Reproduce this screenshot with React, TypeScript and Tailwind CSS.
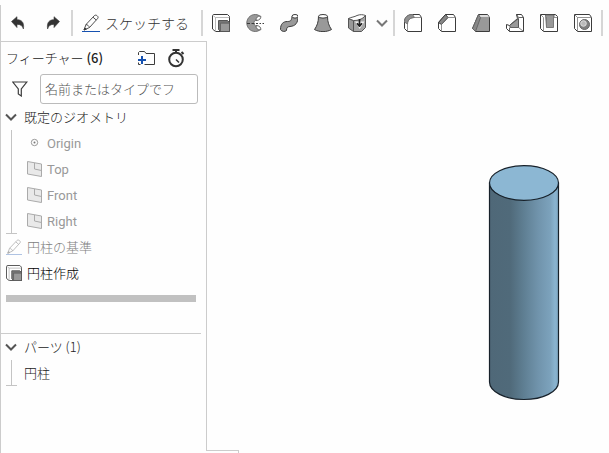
import type { ReactNode } from 'react';

const line = '#3c3c3c';
const fill = '#999999';

function Icon({ size = 18, children }: { size?: number; children: ReactNode }) {
  return (
    <svg className="shrink-0" width={size} height={size} viewBox="0 0 18 18" fill="none" stroke={line} strokeLinejoin="round">
      {children}
    </svg>
  );
}

function UndoIcon() {
  return (
    <Icon>
      <path d="M2.500 7.500 8 2.700v3c4.700 0 7.500 2.600 6.400 9.300-.9-3.300-2.900-4.700-6.400-4.600v3.200z" fill="#333" strokeWidth=".6" />
    </Icon>
  );
}

function RedoIcon() {
  return (
    <Icon>
      <path d="M15.500 7.500 10 2.700v3c-4.700 0-7.500 2.600-6.400 9.300.9-3.300 2.900-4.700 6.400-4.600v3.200z" fill="#333" strokeWidth=".6" />
    </Icon>
  );
}

function SketchIcon({ size }: { size?: number }) {
  return (
    <Icon size={size}>
      <path d="M2 16l2-5.500L12.500 1.500c1.500-1.200 4.500 1 3.300 2.800L7.500 13.500z M4 10.500c1.500.2 3 1.500 3.500 3 M11 3.200l3.200 2.800" strokeWidth=".9" />
      <path d="M2 16l.8-2 1.500 1.200z" fill={line} />
      <path d="M0 17.500h18" stroke="#1651b0" />
    </Icon>
  );
}

function ExtrudeIcon({ size }: { size?: number }) {
  return (
    <Icon size={size}>
      <path d="M.5 1.500 1.500.5h14l2 2v15h-14l-3-2.500z" fill="#fff" />
      <path d="M.5 1l3 2.500v14M3.500 3.500h14" stroke="#aaa" strokeWidth=".8" />
      <path d="M6.500 6.500h9l2 2v9h-9l-2-2z" fill="#777" stroke="#555" />
      <path d="M9 9.500h8v7.500H9z" fill={fill} stroke="none" />
      <path d="M8.500 17V9h8.500" stroke="#666" />
    </Icon>
  );
}

function RevolveIcon() {
  return (
    <Icon>
      <path d="M12 1C6-1 .8 3.500.8 9s5.200 10 11.200 8l2.500-1.500L11.500 12c-4.500 1-5-6-.5-6l3.500-3.500z" fill={fill} stroke="#707070" />
      <path d="M10 6.500c0-3 1.500-4.800 4.800-4.300.3 2.300-1.300 4.300-4.800 4.300zM10 11.500c0 3 1.500 4.800 4.800 4.300.3-2.300-1.300-4.300-4.800-4.300z" fill="#fff" stroke="#666" />
      <path d="M1 9.500h3M5.500 9.500h3M10 9.500h2M13.500 9.500h1.500M16.500 9.500h1.500" />
    </Icon>
  );
}

function SweepIcon() {
  return (
    <Icon>
      <path d="M.5 15.500C.5 10 3 7.500 7.500 7.500 11.500 7.500 11.500 5.500 12 2.500h6c0 6.500-2.500 9.500-8 10-3 .2-3.500 1.500-3.500 4-1.500 1.500-5 1.200-6-1z" fill={fill} />
      <ellipse cx="15" cy="2.300" rx="3" ry="1.800" fill="#fff" />
    </Icon>
  );
}

function LoftIcon() {
  return (
    <Icon>
      <path d="M4.500 2.500C4.500 8 3 12 .5 15.500 5 18.300 13 18.300 17.500 15.500 15 12 13.500 8 13.500 2.500z" fill={fill} />
      <ellipse cx="9" cy="2.300" rx="4.500" ry="1.800" fill="#fff" />
    </Icon>
  );
}

function ImportIcon() {
  return (
    <Icon>
      <path d="M.5 4.500 5.500 6.500v11l-5-3.500z" fill="#999" stroke="#555" />
      <path d="M5.500 6.500c4-.5 8-1.500 12-5v12l-4 4h-8z" fill="#a5a5a5" stroke="#555" />
      <path d="M.5 4.500c3-1.500 6-1.500 8.500-3 3-1.200 6-1 8.500 0C14 5.500 10 6.500 5.500 6.500z" fill="#fff" stroke="#555" />
      <path d="M7 7.500h9.500l-4.800 7.500z" fill="#f4f4f4" stroke="none" />
      <path d="M11.500 5v7M9 9.200l2.500 3L14 9.200" stroke="#222" strokeWidth="1.700" />
    </Icon>
  );
}

function FilletIcon() {
  return (
    <Icon>
      <path d="M8.500.5h7l2 3v14h-14l-3-3v-7c0-4 3-7 8-7z" fill="#fff" />
      <path d="M.5 8C.5 3.500 4 .5 8.500.5l2 3C6.500 3.500 3.500 6 3.500 10z" fill="#909090" stroke="#777" />
      <path d="M3.500 17.500V10c0-4 3-6.500 7-6.500h7" stroke="#777" strokeWidth=".8" />
    </Icon>
  );
}

function ChamferIcon() {
  return (
    <Icon>
      <path d="M7.500.5h8l2 3v14h-14l-3-3v-6z" fill="#fff" />
      <path d="M7.500.5l2.500 3-6.500 7-3-2z" fill="#888" />
      <path d="M3.500 17.500v-7l6.500-7h7.500" stroke="#777" strokeWidth=".8" />
    </Icon>
  );
}

function DraftIcon() {
  return (
    <Icon>
      <path d="M6.500.5h9l2 3v14h-14l-3-3z" fill={fill} />
      <path d="M6.500.5l2 3-5 14-3-3z" fill="#888" stroke="#666" />
      <path d="M7.500 1h8l1.500 2H8.500z" fill="#ddd" stroke="none" />
    </Icon>
  );
}

function RibIcon() {
  return (
    <Icon>
      <path d="M10.500.5h5l2 3v14h-14l-3-3v-4l3 1 8-7z" fill="#fff" />
      <path d="M12.500 4.500v9h-8l-1-2z" fill={fill} stroke="#555" />
      <path d="M10.500.5l2 3h5M3.500 13.500v4" strokeWidth=".8" />
      <path d="M12.500 13.500l4.500 3.500M4 13.500h9" stroke="#666" strokeWidth=".8" />
    </Icon>
  );
}

function ShellIcon() {
  return (
    <Icon>
      <path d="M.5.500h15l2 2v15h-14l-3-3z" fill="#fff" />
      <path d="M5.500 1h8v12.500h-7z" fill={fill} stroke="#666" strokeWidth=".8" />
      <path d="M6.500 3v10.500M.5.5l3 3v14M15.500.5l-2 3h4" stroke="#777" strokeWidth=".8" />
    </Icon>
  );
}

function HoleIcon() {
  return (
    <Icon>
      <path d="M.5.500h15l2 3v14h-14l-3-3z" fill="#fff" />
      <path d="M.5.5l3 3h14M3.500 3.500v14" stroke="#777" strokeWidth=".8" />
      <circle cx="10.500" cy="10.500" r="5" fill="#808080" stroke="#666" />
      <circle cx="9.500" cy="9.500" r="2.800" fill="#bbb" stroke="#ddd" />
    </Icon>
  );
}

function Chevron({ color = '#555' }: { color?: string }) {
  return (
    <svg className="shrink-0" width="12" height="12" viewBox="0 0 12 12" fill="none" stroke={color} strokeWidth="2">
      <path d="M1 3.500l5 5 5-5" />
    </svg>
  );
}

function FolderIcon() {
  return (
    <svg width="20" height="18" viewBox="0 0 20 18" fill="none" stroke={line}>
      <path d="M2.500 6V3.500l1-1h5l1.500 2h8.500v11H8.500M2.500 13.500v2h2" />
      <path d="M6 7v8M2 11h8" stroke="#1651b0" strokeWidth="2" />
    </svg>
  );
}

function StopwatchIcon() {
  return (
    <svg width="18" height="20" viewBox="0 0 18 20" fill="none" stroke="#333">
      <circle cx="9" cy="11.500" r="6.800" strokeWidth="2" />
      <path d="M5.500 2h7M9 2v3M14.500 4l2 2" strokeWidth="2" />
      <path d="M9 11.500l3 3" strokeWidth="1.500" />
    </svg>
  );
}

function FilterIcon() {
  return (
    <svg className="shrink-0" width="16" height="16" viewBox="0 0 16 16" fill="none" stroke={line} strokeWidth="1.200">
      <path d="M.8 1h14L9.300 8v7l-3-2V8z" />
    </svg>
  );
}

function OriginIcon() {
  return (
    <svg width="16" height="16" viewBox="0 0 16 16" fill="none" stroke="#999">
      <circle cx="7.500" cy="7.500" r="3.200" />
      <circle cx="7.500" cy="7.500" r="1" fill="#777" stroke="none" />
    </svg>
  );
}

function PlaneIcon() {
  return (
    <svg width="16" height="16" viewBox="0 0 16 16" stroke="#aaa">
      <path d="M.5.500l14 2.500v12.500l-14-2.500z" fill="#e9e9e9" />
      <path d="M7.500 2v6l7 1.500" fill="none" />
    </svg>
  );
}

function Divider() {
  return <div className="mx-px h-[26px] w-[2px] shrink-0 bg-[#d6d6d6]" />;
}

function ToolButton({ label, children }: { label: string; children: ReactNode }) {
  return (
    <button aria-label={label} className="flex h-8 w-[34px] shrink-0 items-center justify-center">
      {children}
    </button>
  );
}

function Toolbar() {
  return (
    <header className="flex h-9 items-center">
      <div className="flex gap-px">
        <ToolButton label="元に戻す"><UndoIcon /></ToolButton>
        <ToolButton label="やり直し"><RedoIcon /></ToolButton>
      </div>
      <Divider />
      <button className="flex shrink-0 items-center gap-[5px] pr-[11px] pl-2 text-sm font-light whitespace-nowrap">
        <SketchIcon />
        スケッチする
      </button>
      <Divider />
      <ToolButton label="押し出し"><ExtrudeIcon /></ToolButton>
      <ToolButton label="回転"><RevolveIcon /></ToolButton>
      <ToolButton label="スイープ"><SweepIcon /></ToolButton>
      <ToolButton label="ロフト"><LoftIcon /></ToolButton>
      <ToolButton label="厚み"><ImportIcon /></ToolButton>
      <button aria-label="その他" className="flex h-8 w-[18px] shrink-0 items-center pl-[2px]">
        <Chevron color="#777" />
      </button>
      <Divider />
      <ToolButton label="フィレット"><FilletIcon /></ToolButton>
      <ToolButton label="面取り"><ChamferIcon /></ToolButton>
      <ToolButton label="ドラフト"><DraftIcon /></ToolButton>
      <ToolButton label="リブ"><RibIcon /></ToolButton>
      <ToolButton label="シェル"><ShellIcon /></ToolButton>
      <ToolButton label="穴"><HoleIcon /></ToolButton>
      <Divider />
    </header>
  );
}

function TreeLine() {
  return (
    <div className="ml-[5px] flex w-[11px] shrink-0 justify-center border-b border-[#c4c4c4]">
      <div className="w-px bg-[#c4c4c4]" />
    </div>
  );
}

const geometry = [
  { name: 'Origin', icon: <OriginIcon /> },
  { name: 'Top', icon: <PlaneIcon /> },
  { name: 'Front', icon: <PlaneIcon /> },
  { name: 'Right', icon: <PlaneIcon /> },
];

function Sidebar() {
  return (
    <aside className="w-[206px] shrink-0 border-t border-r border-[#cccccc] text-[13px] font-light text-[#222222]">
      <div className="flex h-8 items-center justify-between pr-[21px] pl-[5px]">
        <h2>フィーチャー <span className="font-medium">(6)</span></h2>
        <div className="flex items-center gap-[11px]">
          <button aria-label="フォルダーを追加"><FolderIcon /></button>
          <button aria-label="再構築時間"><StopwatchIcon /></button>
        </div>
      </div>
      <div className="flex items-center gap-3 pr-2 pl-[11px]">
        <FilterIcon />
        <input
          type="text"
          aria-label="フィルター"
          placeholder="名前またはタイプでフ"
          className="h-[30px] w-full min-w-0 rounded-[3px] border border-[#bbbbbb] bg-white px-1 font-[Roboto,'Noto_Sans_CJK_JP',sans-serif] placeholder:text-[#555555]"
        />
      </div>

      <button className="flex h-[26px] items-center gap-[7px] pl-1">
        <Chevron />
        既定のジオメトリ
      </button>
      <div className="flex text-[#999999]">
        <TreeLine />
        <ul className="pl-[10px] font-normal">
          {geometry.map((item) => (
            <li key={item.name} className="flex h-[26px] items-center gap-1">
              {item.icon}
              <p><span className="font-[Roboto,sans-serif]">{item.name}</span></p>
            </li>
          ))}
        </ul>
      </div>
      <div className="flex h-[26px] items-center gap-[5px] pl-[5px] text-[#808080]">
        <span className="opacity-40"><SketchIcon size={16} /></span>
        円柱の基準
      </div>
      <div className="flex h-[26px] items-center gap-[5px] pl-[5px] text-black">
        <ExtrudeIcon size={16} />
        円柱作成
      </div>
      <div className="mt-[9px] mr-[10px] mb-[31px] ml-[5px] h-[7px] bg-[#c1c1c1]" />

      <section className="mr-[5px] border-t border-[#cccccc]">
        <button className="flex h-[26px] items-center gap-[7px] pl-1">
          <Chevron />
          パーツ (1)
        </button>
        <div className="flex h-[26px] items-center">
          <div className="flex h-full"><TreeLine /></div>
          <span className="pl-[7px]">円柱</span>
        </div>
      </section>
    </aside>
  );
}

function Cylinder() {
  return (
    <svg width="72" height="236" viewBox="0 0 72 236" stroke="#17212a" strokeWidth="1.200">
      <defs>
        <linearGradient id="side">
          <stop offset="0" stopColor="#4f6878" />
          <stop offset=".3" stopColor="#506a7a" />
          <stop offset=".5" stopColor="#5f7f93" />
          <stop offset=".7" stopColor="#7093ab" />
          <stop offset=".88" stopColor="#7ca2bc" />
          <stop offset=".95" stopColor="#8ab4d0" />
          <stop offset="1" stopColor="#7fa7c2" />
        </linearGradient>
      </defs>
      <path d="M1.500 18v199a34.500 17.500 0 0 0 69 0V18z" fill="url(#side)" />
      <ellipse cx="36" cy="18" rx="34.500" ry="17.300" fill="#8cb7d3" />
    </svg>
  );
}

export default function App() {
  return (
    <div className="flex min-h-screen flex-col bg-[#fefefe] pt-[5px] font-['Noto_Sans_CJK_JP',sans-serif] text-[#333333]">
      <div className="flex flex-1 flex-col border-l border-[#cccccc]">
        <Toolbar />
        <div className="flex flex-1">
          <Sidebar />
          <main className="flex flex-1 justify-end pt-[124px] pr-[49px]">
            <Cylinder />
          </main>
        </div>
        <div className="ml-[205px] h-[3px] w-[33px] border-t border-r border-[#cccccc]" />
      </div>
    </div>
  );
}
